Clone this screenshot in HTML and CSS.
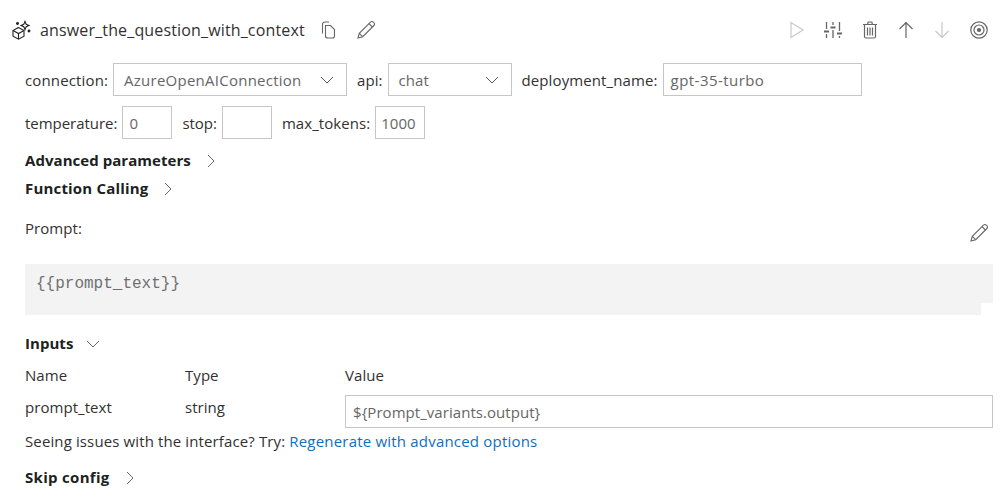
FILE: index.html
```html
<!DOCTYPE html>
<html lang="en">
<head>
<meta charset="utf-8">
<title>answer_the_question_with_context</title>
<link rel="stylesheet" href="styles.css">
</head>
<body>
<header class="title-bar">
  <div class="title-left">
    <svg class="node-icon" width="20" height="20" viewBox="0 0 20 20" fill="none" stroke="#222" stroke-width="1.1"><path d="M7.500 7.500l5.500 3v5.700l-5.500 3-5.500-3v-5.700z"/><path d="M2 10.500l5.500 3 5.500-3M7.500 13.500v5.500"/><path d="M14 1.500l1.200 2.800 2.800 1.200-2.800 1.200L14 9.500l-1.200-2.800-2.800-1.200 2.800-1.200z"/><circle cx="6.500" cy="3.500" r=".9" fill="#222"/><circle cx="18" cy="11" r=".9" fill="#222"/></svg>
    <span class="node-name">answer_the_question_with_context</span>
    <svg class="copy-icon" width="18" height="18" viewBox="0 0 18 18" fill="none" stroke="#666" stroke-width="1.100"><path d="M2.500 12.500v-9a2.500 2.500 0 0 1 2.500-2.500h4"/><path d="M5.500 4.500h5l4 4v6.500a2 2 0 0 1-2 2h-5a2 2 0 0 1-2-2z"/></svg>
    <svg class="edit-icon" width="20" height="20" viewBox="0 0 20 20" fill="none" stroke="#666" stroke-width="1.100"><path d="M2 18l1.300-4.700L14.500 2.100a2 2 0 0 1 2.900 0l.5.500a2 2 0 0 1 0 2.900L6.700 16.700z"/><path d="M3.300 13.300l3.400 3.400M13 3.600l3.400 3.400"/></svg>
  </div>
  <div class="toolbar">
    <span class="tool"><svg width="16" height="18" viewBox="0 0 16 18" fill="none" stroke="#c8c8c8" stroke-width="1.200"><path d="M2 1.500v15l12-7.500z"/></svg></span>
    <span class="tool"><svg width="20" height="18" viewBox="0 0 20 18" fill="none" stroke="#666" stroke-width="1.300"><path d="M3.500 1v7M3.500 13v4M10 1v3M10 9v8M16.500 1v9M16.500 15v2"/><path d="M1 10.500h5M7.500 6.500h5M14 12.500h5" stroke-width="2.200"/></svg></span>
    <span class="tool"><svg width="16" height="18" viewBox="0 0 16 18" fill="none" stroke="#666" stroke-width="1.200"><path d="M1 3.500h14M5.500 3.500l.7-2.500h3.600l.7 2.500M2.500 3.500v12a1.500 1.500 0 0 0 1.500 1.500h8a1.500 1.500 0 0 0 1.500-1.500v-12M5.500 6.500v8M8 6.500v8M10.500 6.500v8"/></svg></span>
    <span class="tool"><svg width="16" height="18" viewBox="0 0 16 18" fill="none" stroke="#666" stroke-width="1.200"><path d="M8 17V2M1.500 8L8 1.500 14.500 8"/></svg></span>
    <span class="tool"><svg width="16" height="18" viewBox="0 0 16 18" fill="none" stroke="#c8c8c8" stroke-width="1.200"><path d="M8 1v15M1.500 10L8 16.500 14.500 10"/></svg></span>
    <span class="tool"><svg width="18" height="18" viewBox="0 0 18 18" fill="none" stroke="#666" stroke-width="1.200"><circle cx="9" cy="9" r="8.200"/><circle cx="9" cy="9" r="5"/><circle cx="9" cy="9" r="1.500" fill="#666"/></svg></span>
  </div>
</header>

<div class="field-row row-one">
  <span class="label">connection:</span>
  <div class="box select conn"><span>AzureOpenAIConnection</span><svg class="chev" width="14" height="8" viewBox="0 0 14 8" fill="none" stroke="#555"><path d="M1 1l6 6 6-6"/></svg></div>
  <span class="label gap-left">api:</span>
  <div class="box select api"><span>chat</span><svg class="chev" width="14" height="8" viewBox="0 0 14 8" fill="none" stroke="#555"><path d="M1 1l6 6 6-6"/></svg></div>
  <span class="label gap-left deploy-label">deployment_name:</span>
  <div class="box deploy">gpt-35-turbo</div>
</div>

<div class="field-row row-two">
  <span class="label">temperature:</span>
  <div class="box small">0</div>
  <span class="label gap-left">stop:</span>
  <div class="box small"></div>
  <span class="label gap-left tokens-label">max_tokens:</span>
  <div class="box tokens">1000</div>
</div>

<div class="section-head adv"><b>Advanced parameters</b><svg width="8" height="14" viewBox="0 0 8 14" fill="none" stroke="#666"><path d="M1 1l6 6-6 6"/></svg></div>
<div class="section-head func"><b>Function Calling</b><svg width="8" height="14" viewBox="0 0 8 14" fill="none" stroke="#666"><path d="M1 1l6 6-6 6"/></svg></div>

<div class="prompt-head">
  <span class="label">Prompt:</span>
  <svg width="20" height="20" viewBox="0 0 20 20" fill="none" stroke="#666" stroke-width="1.100"><path d="M2 18l1.300-4.700L14.500 2.100a2 2 0 0 1 2.900 0l.5.500a2 2 0 0 1 0 2.900L6.700 16.700z"/><path d="M3.300 13.300l3.400 3.400M13 3.600l3.400 3.400"/></svg>
</div>

<div class="code-top"><code>{{prompt_text}}</code></div>
<div class="code-bottom"></div>

<div class="section-head inputs"><b>Inputs</b><svg width="14" height="8" viewBox="0 0 14 8" fill="none" stroke="#666"><path d="M1 1l6 6 6-6"/></svg></div>

<div class="input-grid">
  <span class="label">Name</span><span class="label">Type</span><span class="label">Value</span>
  <span class="label">prompt_text</span><span class="label">string</span>
  <div class="box value">${Prompt_variants.output}</div>
</div>

<p class="hint">Seeing issues with the interface? Try: <a href="#">Regenerate with advanced options</a></p>

<div class="section-head skip"><b>Skip config</b><svg width="8" height="14" viewBox="0 0 8 14" fill="none" stroke="#666"><path d="M1 1l6 6-6 6"/></svg></div>
</body>
</html>
```

FILE: styles.css
```css
* { box-sizing: border-box; }
html, body { height: 497px; overflow: hidden; }
body {
  margin: 0;
  padding: 0 7px 0 25px;
  background: #fff;
  color: #323130;
  font-family: "Open Sans", "Noto Sans", sans-serif;
  font-size: 15px;
  letter-spacing: 0.05px;
}
.title-bar {
  display: flex;
  justify-content: space-between;
  align-items: center;
  height: 40px;
  margin: 10px 0 13px -14px;
}
.title-left { display: flex; align-items: center; }
.node-icon { margin-right: 9px; }
.node-name { font-size: 16px; margin-right: 15px; letter-spacing: 0.15px; }
.copy-icon { margin-right: 18px; }
.toolbar { display: flex; align-items: center; margin-right: -4px; }
.tool { width: 36.400px; display: flex; justify-content: center; }
.field-row { display: flex; align-items: center; height: 33px; }
.row-one { gap: 5px; }
.row-one .label:first-child { letter-spacing: 0.14px; }
.row-one .deploy-label { letter-spacing: 0.11px; }
.row-two { margin-top: 10px; gap: 5px; }
.row-two .label { letter-spacing: -0.03px; }
.row-two .tokens-label { letter-spacing: 0.06px; }
.gap-left { margin-left: 5px; }
.box {
  height: 100%;
  border: 1px solid #c8c6c4;
  display: flex;
  align-items: center;
  padding: 0 10px;
  color: #666;
}
.select { justify-content: space-between; padding-right: 12px; }
.conn { width: 234px; letter-spacing: 0.25px; }
.api { width: 124px; }
.deploy { width: 199px; padding: 0 7px; letter-spacing: 0.45px; }
.small { width: 50px; padding: 0 6px; }
.tokens { width: 50px; padding: 0 5px; }
.section-head { display: flex; align-items: center; gap: 16px; color: #201f1e; }
.section-head b { font-weight: 700; padding-bottom: 2px; }
.adv { margin-top: 8px; height: 28px; }
.func { height: 28px; letter-spacing: 0.18px; }
.inputs { margin-top: 15px; height: 28px; gap: 13px; }
.prompt-head {
  display: flex;
  justify-content: space-between;
  align-items: center;
  margin-top: 12px;
  height: 26px;
}
.prompt-head svg { margin-top: 10px; margin-right: 4px; }
.code-top {
  margin-top: 23px;
  height: 39px;
  background: #f3f3f3;
  padding: 11px 11px 0;
  font-size: 0;
}
code { font-family: "Liberation Mono", monospace; font-size: 16px; letter-spacing: 0; color: #707070; }
.code-bottom { height: 12px; width: 956px; background: #f3f3f3; }
.input-grid {
  display: grid;
  grid-template-columns: 160px 160px 1fr;
  grid-template-rows: 37px 33px;
  align-items: center;
}
.input-grid .label:nth-child(-n+3) { margin-top: -3px; }
.input-grid .label:nth-child(4), .input-grid .label:nth-child(5) { margin-top: -10px; }
.value { height: 33px; padding: 0 7px; }
.hint { margin: 0; height: 26px; line-height: 26px; letter-spacing: 0.12px; }
.hint a { color: #106ebe; text-decoration: none; letter-spacing: 0.2px; }
.skip { margin-top: 12px; height: 24px; letter-spacing: 0.3px; }
```
